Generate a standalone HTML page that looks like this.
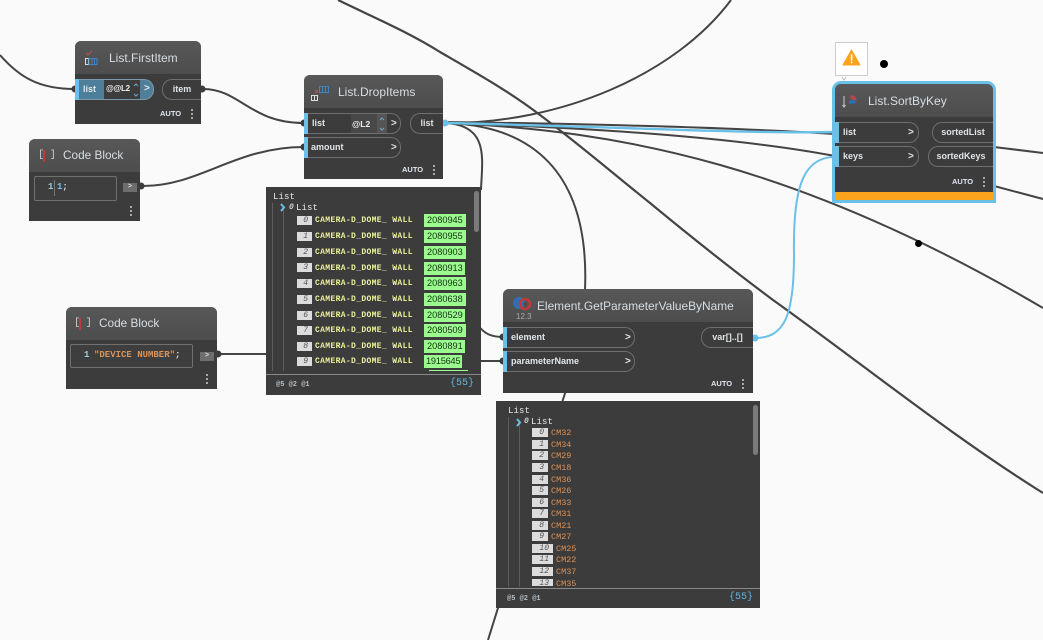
<!DOCTYPE html>
<html><head><meta charset="utf-8">
<style>
html,body{margin:0;padding:0;width:1043px;height:640px;overflow:hidden;background:#fafafa;font-family:"Liberation Sans",sans-serif}
div,span{position:absolute;box-sizing:border-box;white-space:nowrap}
svg{position:absolute;left:0;top:0;overflow:visible}
.node{background:#3c3c3c;border-radius:6px 6px 0 0}
.hd{left:0;top:0;right:0;background:linear-gradient(#585858,#4d4d4d);border-radius:6px 6px 0 0}
.t{font-size:12px;color:#d6dee4;line-height:16px}
.port{border:1px solid #6f6f6f;border-left:0;border-radius:0 10px 10px 0;height:21px;background:#3c3c3c}
.bar{left:0;top:0;width:4px;height:21px;background:#6ac0e7}
.out{border:1px solid #6f6f6f;border-right:0;border-radius:10px 0 0 10px;height:21px;color:#dfe3e6;font-size:9px;font-weight:bold;line-height:19px;text-align:center}
.lb{color:#e2e6e8;font-size:9px;font-weight:bold;line-height:12px}
.gt{color:#e4e4e4;font-size:10px;font-weight:bold;line-height:12px}
.auto{color:#dfe6f2;font-size:7.5px;font-weight:bold;line-height:10px}
.dots{width:2px;height:10px;background:repeating-linear-gradient(#aaa 0 2px,transparent 2px 4px)}
.cb{border:1px solid #707070;border-radius:2px;background:#3e3e3e}
.gb{width:14px;height:9px;background:#6d6d6d;color:#ddd;font:bold 7px/9px "Liberation Mono",monospace;text-align:center}
.m{font-family:"Liberation Mono",monospace;font-size:8px;font-weight:bold;line-height:10px}
.hl{font-size:9px;font-weight:normal;letter-spacing:.1px}
.wt{background:#3c3c3c}
.i{height:9px;background:#dcdcdc;color:#555;font:italic 8px/9px "Liberation Mono",monospace;text-align:right;padding-right:4px}
.y{color:#eef29c;font:bold 8px/10px "Liberation Mono",monospace;letter-spacing:.35px}
.g{height:13px;background:#9bfb8e;color:#163016;font-size:9.2px;line-height:12px;padding-left:3px;overflow:hidden}
.o{color:#dd9256;font:8.5px/10px "Liberation Mono",monospace}
.v{width:1px;background:#5d5d5d}
.ftl{height:1px;left:0;right:0;background:#8a8a8a}
.ft{color:#b5bec4;font:bold 7px/10px "Liberation Mono",monospace}
.cnt{color:#5fb4e4;font:10px/12px "Liberation Mono",monospace}
.sb{width:5px;background:#7a7a7a;border-radius:3px}
.br{color:#ccc;font:10.5px/15px "Liberation Mono",monospace;letter-spacing:-.5px}
</style></head><body>

<svg width="1043" height="640" fill="none" stroke="#444" stroke-width="2">
<path d="M0 55C20 78 40 89 75 89"/>
<path d="M203 89C240 89 250 123 304 123"/>
<path d="M143 186C200 186 235 147 304 147"/>
<path d="M217 354H266"/>
<path d="M445 123C490 125 482 160 481 190"/>
<path d="M478 325C484 334 492 337 503 337"/>
<path d="M478 361H503"/>
<path d="M338 0C375 18 408 32 440 52C478 74 510 92 540 115C580 145 615 175 650 203C690 236 730 268 773 300C860 362 950 435 1043 493" stroke-width="2.2"/>
<path d="M445 123C560 124 675 75 731 0"/>
<path d="M445 123C530 125 590 170 585 290"/>
<path d="M566 390L488 640"/>
<path d="M445 123C620 130 800 165 1043 308"/>
<path d="M445 123C600 128 740 138 835 156"/>
<path d="M445 122C600 124 740 128 835 134"/>
<path d="M994 147L1043 153"/>
<path d="M994 186L1043 199"/>
<path d="M445 123C600 126 740 134 835 132" stroke="#6ac0e7" stroke-width="2.4"/>
<path d="M755 338C785 338 794 315 794 255C793 195 800 157 835 157" stroke="#6ac0e7" stroke-width="2"/>
<g stroke="none" fill="#3c3c3c">
<circle cx="75" cy="89" r="3.5"/><circle cx="202" cy="89" r="3.5"/><circle cx="304" cy="123" r="3.5"/><circle cx="304" cy="147" r="3.5"/><circle cx="141" cy="186" r="3.5"/><circle cx="218" cy="354" r="3.5"/><circle cx="503" cy="337" r="3.5"/><circle cx="503" cy="361" r="3.5"/>
</g>
<g stroke="none" fill="#6ac0e7"><circle cx="445" cy="123" r="3.5"/><circle cx="755" cy="338" r="3.5"/></g>
<g stroke="none" fill="#000"><circle cx="884" cy="64" r="4"/><circle cx="918.500" cy="243.500" r="3.5"/></g>
</svg>

<!-- List.FirstItem -->
<div class="node" style="left:75px;top:41px;width:126px;height:83px">
<div class="hd" style="height:33px"></div>
<svg width="30" height="30" style="left:8px;top:8px" fill="none"><path d="M3 4l2 2 4-4" stroke="#b5555a" stroke-width="1"/><rect x="2.500" y="9.500" width="3" height="6" stroke="#ddd"/><rect x="6" y="9.500" width="8" height="6" stroke="#3d84c4"/><path d="M9 10v5M11.500 10v5" stroke="#3d84c4"/></svg>
<div class="t" style="left:34px;top:9px">List.FirstItem</div>
<div class="port" style="left:0;top:38px;width:79px;background:#4e7f9a;border-color:#7d98a8"><div class="bar" style="top:-1px"></div>
<div class="lb" style="left:8px;top:3px">list</div>
<div style="left:29px;top:0;width:36px;height:19px;background:#3c3c3c"></div>
<div class="lb" style="left:31px;top:3px;font-size:8px;letter-spacing:-.3px;color:#eee">@@L2</div>
<svg width="10" height="20" style="left:57px;top:0" fill="none" stroke="#6aa8c8"><path d="M2 6l2-2 2 2M2 14l2 2 2-2"/></svg>
<div class="gt" style="left:69px;top:3px">&gt;</div></div>
<div class="out" style="left:87px;top:38px;width:39px">item</div>
<div class="auto" style="left:85px;top:68px">AUTO</div><div class="dots" style="left:116px;top:68px"></div>
</div>

<!-- Code Block 1 -->
<div class="node" style="left:29px;top:139px;width:111px;height:82px">
<div class="hd" style="height:33px"></div>
<div class="br" style="left:9px;top:9px">[ ]</div><div style="left:14px;top:11px;width:2px;height:12px;background:#c0393b"></div>
<div class="t" style="left:34px;top:8px;font-size:11.8px">Code Block</div>
<div class="cb" style="left:5px;top:37px;width:83px;height:25px"></div>
<div class="m" style="left:19px;top:43px;color:#9fc8d8;font-size:9px">1</div><div style="left:25px;top:41px;width:1px;height:16px;background:#777"></div>
<div class="m" style="left:28px;top:43px;color:#74bde8;font-size:9px">1<span style="position:static;color:#ddd">;</span></div>
<div class="gb" style="left:94px;top:44px">&gt;</div>
<div class="dots" style="left:101px;top:67px"></div>
</div>

<!-- List.DropItems -->
<div class="node" style="left:304px;top:75px;width:139px;height:104px">
<div class="hd" style="height:33px"></div>
<svg width="30" height="30" style="left:6px;top:10px" fill="none"><path d="M5 5l3 3M8 5l-3 3" stroke="#b5555a"/><rect x="1.500" y="10.500" width="6" height="5" stroke="#ddd"/><path d="M4.500 11v4" stroke="#ddd"/><rect x="9.500" y="1.500" width="9" height="6" stroke="#3d84c4" /><path d="M12.500 2v5M15.500 2v5" stroke="#3d84c4"/></svg>
<div class="t" style="left:34px;top:9px">List.DropItems</div>
<div class="port" style="left:0;top:38px;width:97px"><div class="bar" style="top:-1px"></div>
<div class="lb" style="left:8px;top:3px">list</div>
<div style="left:47px;top:0;width:26px;height:19px;background:#484848"></div>
<div style="left:73px;top:0;width:10px;height:19px;background:#555"></div>
<div class="lb" style="left:48px;top:4px;font-size:8.500px;color:#eee">@L2</div>
<svg width="10" height="20" style="left:74px;top:0" fill="none" stroke="#6aa8c8"><path d="M2 6l2-2 2 2M2 14l2 2 2-2"/></svg>
<div class="gt" style="left:87px;top:4px">&gt;</div></div>
<div class="port" style="left:0;top:62px;width:97px"><div class="bar" style="top:-1px"></div>
<div class="lb" style="left:7px;top:3px">amount</div><div class="gt" style="left:87px;top:4px">&gt;</div></div>
<div class="out" style="left:106px;top:38px;width:33px">list</div>
<div class="auto" style="left:98px;top:90px">AUTO</div><div class="dots" style="left:129px;top:90px"></div>
</div>

<!-- Watch 1 -->
<div class="wt" style="left:266px;top:187px;width:215px;height:208px">
<div class="v" style="left:6px;top:16px;height:168px"></div><div class="v" style="left:17px;top:22px;height:162px"></div>
<div class="m hl" style="left:7px;top:5px;color:#e5e5e5">List</div>
<svg width="10" height="10" style="left:14px;top:16px" fill="none" stroke="#6ac0e7" stroke-width="2"><path d="M1 1l3 3.500-3 3.500"/></svg>
<div class="m" style="left:23px;top:16px;color:#ccc;font-style:italic">0</div>
<div class="m hl" style="left:30px;top:16px;color:#e5e5e5">List</div>
<div class="i" style="left:31px;top:29px;width:15px">0</div><div class="y" style="left:49px;top:29px">CAMERA-D_DOME_ WALL</div><div class="g" style="left:158px;top:27px;width:42px">2080945</div>
<div class="i" style="left:31px;top:45px;width:15px">1</div><div class="y" style="left:49px;top:45px">CAMERA-D_DOME_ WALL</div><div class="g" style="left:158px;top:43px;width:42px">2080955</div>
<div class="i" style="left:31px;top:61px;width:15px">2</div><div class="y" style="left:49px;top:61px">CAMERA-D_DOME_ WALL</div><div class="g" style="left:158px;top:59px;width:42px">2080903</div>
<div class="i" style="left:31px;top:76px;width:15px">3</div><div class="y" style="left:49px;top:77px">CAMERA-D_DOME_ WALL</div><div class="g" style="left:158px;top:75px;width:41px">2080913</div>
<div class="i" style="left:31px;top:92px;width:15px">4</div><div class="y" style="left:49px;top:92px">CAMERA-D_DOME_ WALL</div><div class="g" style="left:158px;top:90px;width:42px">2080963</div>
<div class="i" style="left:31px;top:108px;width:15px">5</div><div class="y" style="left:49px;top:108px">CAMERA-D_DOME_ WALL</div><div class="g" style="left:158px;top:106px;width:42px">2080638</div>
<div class="i" style="left:31px;top:124px;width:15px">6</div><div class="y" style="left:49px;top:124px">CAMERA-D_DOME_ WALL</div><div class="g" style="left:158px;top:122px;width:41px">2080529</div>
<div class="i" style="left:31px;top:139px;width:15px">7</div><div class="y" style="left:49px;top:139px">CAMERA-D_DOME_ WALL</div><div class="g" style="left:158px;top:137px;width:42px">2080509</div>
<div class="i" style="left:31px;top:155px;width:15px">8</div><div class="y" style="left:49px;top:155px">CAMERA-D_DOME_ WALL</div><div class="g" style="left:158px;top:153px;width:41px">2080891</div>
<div class="i" style="left:31px;top:170px;width:15px">9</div><div class="y" style="left:49px;top:170px">CAMERA-D_DOME_ WALL</div><div class="g" style="left:158px;top:168px;width:38px;padding-left:2px;letter-spacing:-.2px">1915645</div>
<div style="left:163px;top:183px;width:39px;height:1px;background:#9bfb8e"></div>
<div class="sb" style="left:208px;top:4px;height:41px"></div>
<div class="ftl" style="top:187px"></div>
<div class="ft" style="left:10px;top:193px">@5 @2 @1</div>
<div class="cnt" style="left:184px;top:191px">{<span style="position:static">55</span>}</div>
</div>

<!-- Code Block 2 -->
<div class="node" style="left:66px;top:307px;width:151px;height:82px">
<div class="hd" style="height:33px"></div>
<div class="br" style="left:8px;top:9px">[ ]</div><div style="left:13px;top:11px;width:2px;height:12px;background:#c0393b"></div>
<div class="t" style="left:33px;top:8px;font-size:11.8px">Code Block</div>
<div class="cb" style="left:4px;top:37px;width:123px;height:24px"></div>
<div class="m" style="left:18px;top:43px;color:#9fc8d8;font-size:9px">1</div>
<div class="m" style="left:28px;top:43px;color:#dd9256;font-size:9px">"DEVICE NUMBER"<span style="position:static;color:#ddd">;</span></div>
<div class="gb" style="left:134px;top:45px">&gt;</div>
<div class="dots" style="left:140px;top:67px"></div>
</div>

<!-- Element.GetParameterValueByName -->
<div class="node" style="left:503px;top:289px;width:250px;height:104px">
<div class="hd" style="height:33px"></div>
<svg width="30" height="30" style="left:7px;top:5px"><circle cx="9" cy="9" r="6" fill="#2f6fb5"/><circle cx="15" cy="10" r="5" fill="none" stroke="#c0393b" stroke-width="2.500"/><circle cx="15" cy="10" r="1.500" fill="#6b3b3b"/></svg>
<div style="left:13px;top:23px;color:#aaa;font-size:8px;line-height:10px">12.3</div>
<div class="t" style="left:34px;top:9px;font-size:11.9px">Element.GetParameterValueByName</div>
<div class="port" style="left:0;top:38px;width:132px"><div class="bar" style="top:-1px"></div>
<div class="lb" style="left:8px;top:3px">element</div><div class="gt" style="left:122px;top:4px">&gt;</div></div>
<div class="port" style="left:0;top:62px;width:132px"><div class="bar" style="top:-1px"></div>
<div class="lb" style="left:8px;top:3px">parameterName</div><div class="gt" style="left:122px;top:4px">&gt;</div></div>
<div class="out" style="left:198px;top:38px;width:52px">var[]..[]</div>
<div class="auto" style="left:208px;top:90px">AUTO</div><div class="dots" style="left:239px;top:90px"></div>
</div>

<!-- Watch 2 -->
<div class="wt" style="left:496px;top:401px;width:264px;height:207px">
<div class="v" style="left:12px;top:16px;height:170px"></div><div class="v" style="left:23px;top:22px;height:164px"></div>
<div class="m hl" style="left:12px;top:5px;color:#e5e5e5">List</div>
<svg width="10" height="10" style="left:20px;top:17px" fill="none" stroke="#6ac0e7" stroke-width="2"><path d="M1 1l3 3.500-3 3.500"/></svg>
<div class="m" style="left:28px;top:16px;color:#ccc;font-style:italic">0</div>
<div class="m hl" style="left:35px;top:16px;color:#e5e5e5">List</div>
<div class="i" style="left:36px;top:27px;width:16px">0</div><div class="o" style="left:55px;top:27px">CM32</div>
<div class="i" style="left:36px;top:39px;width:16px">1</div><div class="o" style="left:55px;top:39px">CM34</div>
<div class="i" style="left:36px;top:50px;width:16px">2</div><div class="o" style="left:55px;top:50px">CM29</div>
<div class="i" style="left:36px;top:62px;width:16px">3</div><div class="o" style="left:55px;top:62px">CM18</div>
<div class="i" style="left:36px;top:74px;width:16px">4</div><div class="o" style="left:55px;top:74px">CM36</div>
<div class="i" style="left:36px;top:85px;width:16px">5</div><div class="o" style="left:55px;top:85px">CM26</div>
<div class="i" style="left:36px;top:97px;width:16px">6</div><div class="o" style="left:55px;top:97px">CM33</div>
<div class="i" style="left:36px;top:108px;width:16px">7</div><div class="o" style="left:55px;top:108px">CM31</div>
<div class="i" style="left:36px;top:120px;width:16px">8</div><div class="o" style="left:55px;top:120px">CM21</div>
<div class="i" style="left:36px;top:131px;width:16px">9</div><div class="o" style="left:55px;top:131px">CM27</div>
<div class="i" style="left:36px;top:143px;width:21px">10</div><div class="o" style="left:60px;top:143px">CM25</div>
<div class="i" style="left:36px;top:154px;width:21px">11</div><div class="o" style="left:60px;top:154px">CM22</div>
<div class="i" style="left:36px;top:166px;width:21px">12</div><div class="o" style="left:60px;top:166px">CM37</div>
<div style="left:36px;top:176px;width:60px;height:9px;overflow:hidden"><div class="i" style="left:0;top:2px;width:21px">13</div><div class="o" style="left:24px;top:2px">CM35</div></div>
<div class="sb" style="left:257px;top:4px;height:50px"></div>
<div class="ftl" style="top:187px"></div>
<div class="ft" style="left:11px;top:193px">@5 @2 @1</div>
<div class="cnt" style="left:233px;top:191px">{<span style="position:static">55</span>}</div>
</div>

<!-- Warning -->
<div style="left:835px;top:42px;width:33px;height:34px;background:#fff;border:1px solid #ccc"></div>
<svg width="40" height="50" style="left:835px;top:42px"><path d="M16.500 8L25 23H8Z" fill="#fba31c" stroke="#fba31c" stroke-linejoin="round"/><rect x="15.800" y="12.500" width="1.600" height="6" fill="#fff"/><rect x="15.800" y="19.500" width="1.600" height="1.800" fill="#fff"/><path d="M7 35l2 3 2-3" fill="#fff" stroke="#bbb"/></svg>

<!-- List.SortByKey -->
<div class="node" style="left:832px;top:81px;width:164px;height:122px;border:3px solid #6ac0e7;border-radius:9px 9px 0 0">
<div class="hd" style="height:33px"></div>
<svg width="30" height="30" style="left:6px;top:8px" fill="none"><path d="M3 4v11M1.500 13l1.500 2 1.500-2" stroke="#ccc"/><path d="M8 9l5-2 2 4-7 1z" fill="#2f6fb5"/><path d="M9 3l5 1 2 5-6-2z" fill="#b5474a"/></svg>
<div class="t" style="left:33px;top:9px">List.SortByKey</div>
<div class="port" style="left:0;top:38px;width:84px"><div class="bar" style="top:-1px"></div>
<div class="lb" style="left:8px;top:3px">list</div><div class="gt" style="left:73px;top:4px">&gt;</div></div>
<div class="port" style="left:0;top:62px;width:84px"><div class="bar" style="top:-1px"></div>
<div class="lb" style="left:8px;top:3px">keys</div><div class="gt" style="left:73px;top:4px">&gt;</div></div>
<div class="out" style="left:97px;top:38px;width:61px">sortedList</div>
<div class="out" style="left:93px;top:62px;width:65px">sortedKeys</div>
<div class="auto" style="left:117px;top:93px">AUTO</div><div class="dots" style="left:148px;top:93px"></div>
<div style="left:0;top:108px;right:0;height:8px;background:#fba31c"></div>
</div>

</body></html>
